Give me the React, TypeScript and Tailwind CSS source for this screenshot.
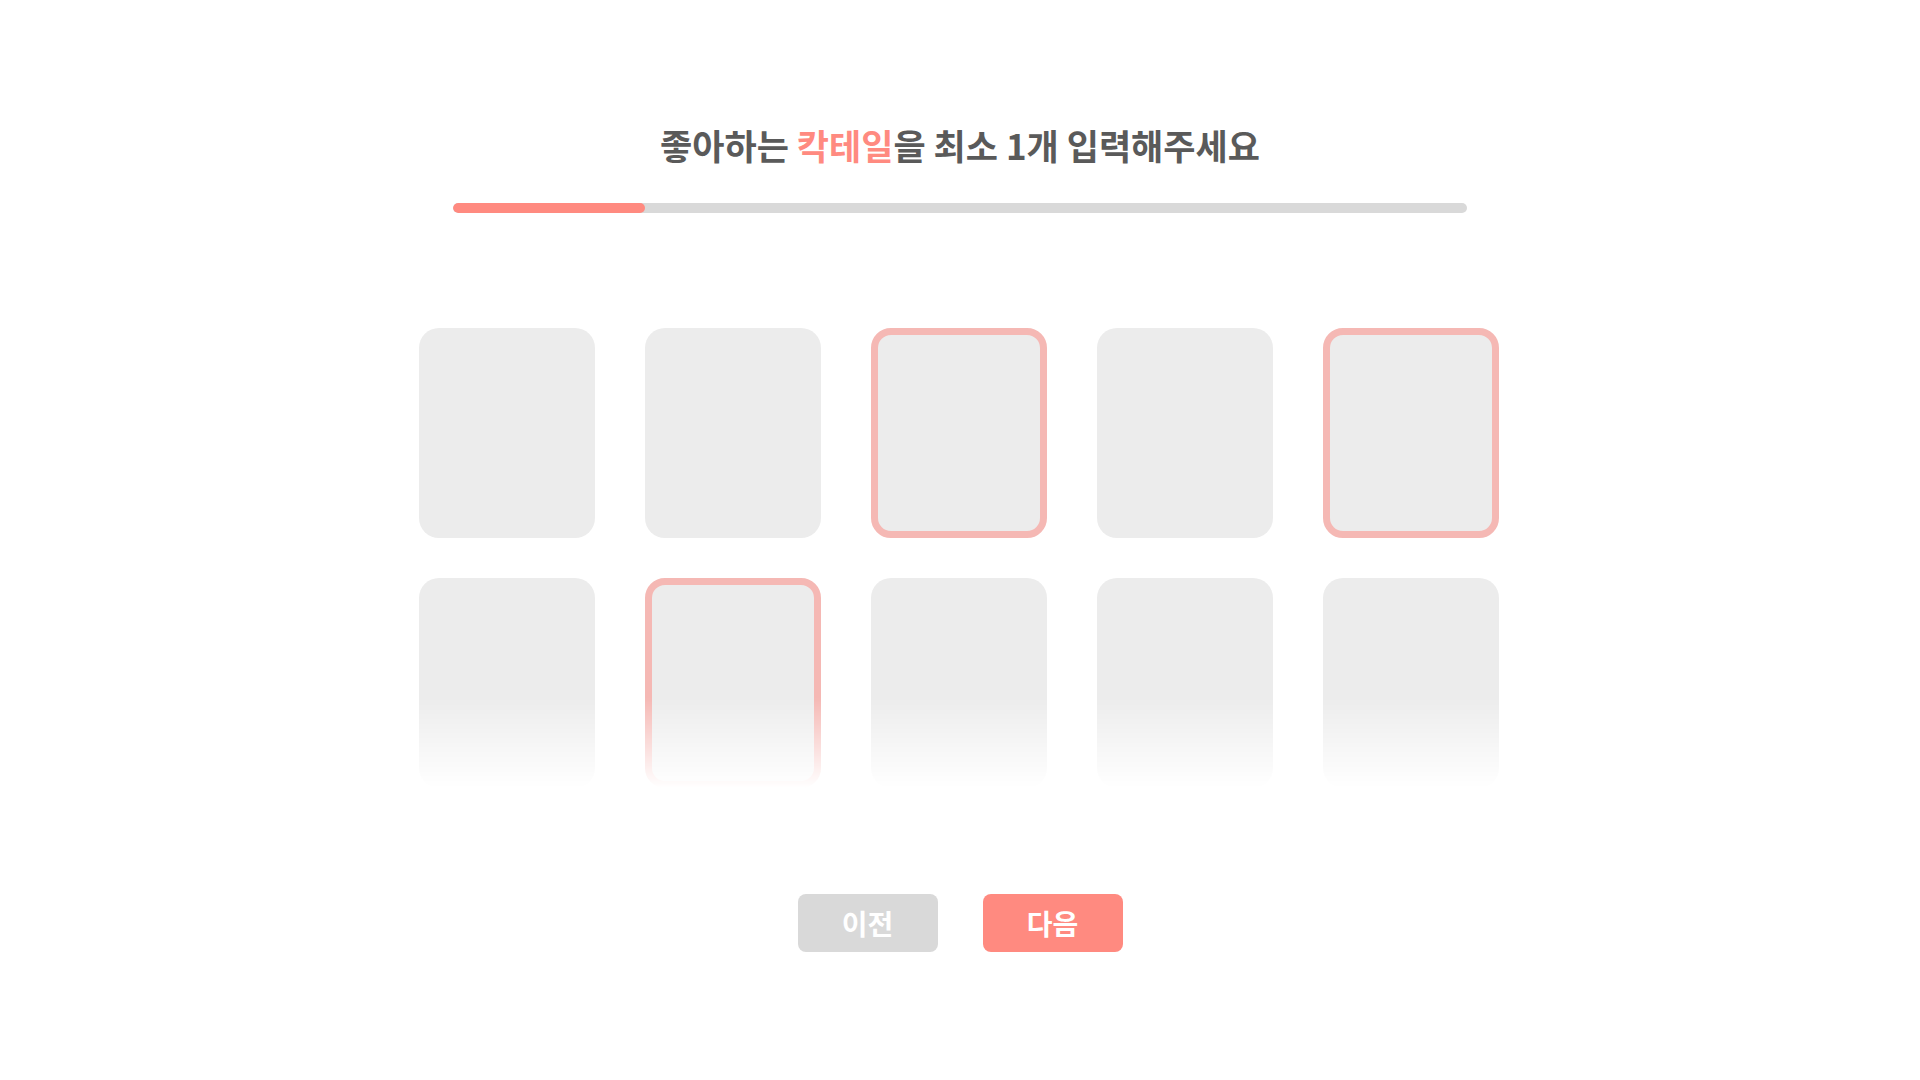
import { useState } from 'react'

const FONT = { fontFamily: '"Noto Sans CJK KR", "Noto Sans", sans-serif' }

export default function App() {
  const [selected, setSelected] = useState<number[]>([2, 4, 6])

  const toggle = (i: number) => {
    setSelected(prev => (prev.includes(i) ? prev.filter(x => x !== i) : [...prev, i]))
  }

  const renderCard = (i: number) => {
    const isOn = selected.includes(i)
    return (
      <button
        key={i}
        onClick={() => toggle(i)}
        className={`h-[210px] w-[176px] rounded-[20px] bg-[#ececec] ${
          isOn ? 'border-[7px] border-[#f5b8b4]' : 'border-0'
        }`}
      />
    )
  }

  return (
    <div className="flex min-h-screen w-full flex-col items-center bg-white" style={FONT}>
      {/* 제목 */}
      <h1 className="mt-[125px] text-[35px] font-bold leading-[40px] text-[#5a5a5a]">
        좋아하는 <span className="text-[#ff8a80]">칵테일</span>을 최소 1개 입력해주세요
      </h1>

      {/* 진행바 */}
      <div className="mt-[38px] h-[10px] w-[1014px] overflow-hidden rounded-full bg-[#d9d9d9]">
        <div className="h-full w-[192px] rounded-full bg-[#ff8a80]" />
      </div>

      {/* 카드 */}
      <div className="mt-[115px] flex flex-col gap-[40px] pr-[2px]">
        <div className="grid grid-cols-5 gap-x-[50px]">
          {[0, 1, 2, 3, 4].map(renderCard)}
        </div>
        <div className="grid grid-cols-5 gap-x-[50px] [mask-image:linear-gradient(to_bottom,black_57%,transparent_100%)]">
          {[5, 6, 7, 8, 9].map(renderCard)}
        </div>
      </div>

      {/* 버튼 */}
      <div className="mt-[106px] flex gap-[45px]">
        <button className="flex h-[58px] w-[140px] items-center justify-center rounded-[8px] bg-[#d9d9d9] text-[28px] font-bold text-white">
          이전
        </button>
        <button className="flex h-[58px] w-[140px] items-center justify-center rounded-[8px] bg-[#ff8a80] text-[28px] font-bold text-white">
          다음
        </button>
      </div>
    </div>
  )
}
